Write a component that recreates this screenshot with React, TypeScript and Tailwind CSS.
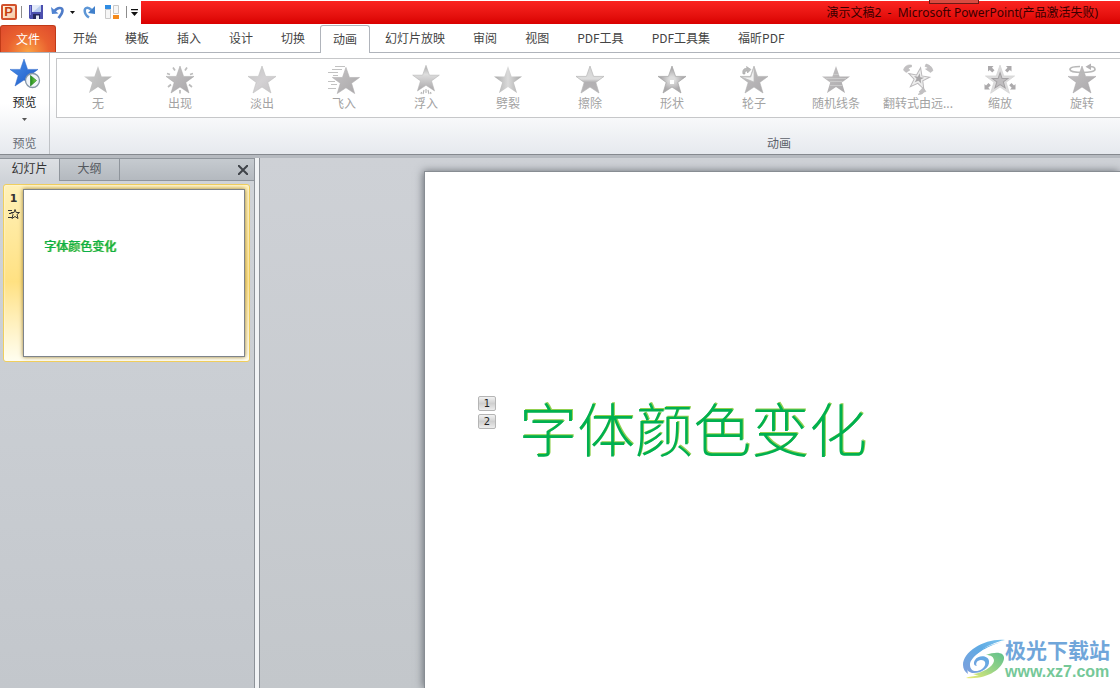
import type { ReactNode } from 'react';

const STAR = '18,4 21.6,14.4 32,14.4 23.8,20.4 27,31 18,25 9,31 12.2,20.4 4,14.4 14.4,14.4';

const ribbonTabs = ['开始', '模板', '插入', '设计', '切换', '动画', '幻灯片放映', '审阅', '视图', 'PDF工具', 'PDF工具集', '福昕PDF'];

type Effect = { id: string; label: string };

const effects: Effect[] = [
  { id: 'none', label: '无' },
  { id: 'appear', label: '出现' },
  { id: 'fade', label: '淡出' },
  { id: 'fly', label: '飞入' },
  { id: 'float', label: '浮入' },
  { id: 'split', label: '劈裂' },
  { id: 'wipe', label: '擦除' },
  { id: 'shape', label: '形状' },
  { id: 'wheel', label: '轮子' },
  { id: 'bars', label: '随机线条' },
  { id: 'turn', label: '翻转式由远...' },
  { id: 'zoom', label: '缩放' },
  { id: 'swivel', label: '旋转' },
];

function Gradients() {
  return (
    <svg className="absolute size-0" aria-hidden="true">
      <defs>
        <linearGradient id="g-none" x1="0" x2="1" y1="0" y2="0.6">
          <stop offset="0" stopColor="#cfcfcf" />
          <stop offset="1" stopColor="#b5b5b5" />
        </linearGradient>
        <linearGradient id="g-solid" x1="0" x2="1" y1="0" y2="1">
          <stop offset="0" stopColor="#c6c4c5" />
          <stop offset="1" stopColor="#a9a7a9" />
        </linearGradient>
        <linearGradient id="g-fade" x1="0" x2="1" y1="0" y2="1">
          <stop offset="0" stopColor="#c2c2c2" />
          <stop offset="0.5" stopColor="#d4d2d4" />
          <stop offset="1" stopColor="#c4c2c4" />
        </linearGradient>
        <linearGradient id="g-down" x1="0" x2="0" y1="0" y2="1">
          <stop offset="0.1" stopColor="#b8b8b8" />
          <stop offset="0.35" stopColor="#dedede" />
          <stop offset="1" stopColor="#a8a6a8" />
        </linearGradient>
        <linearGradient id="g-wipe" x1="0" x2="0" y1="0" y2="1">
          <stop offset="0" stopColor="#d2d2d2" />
          <stop offset="0.48" stopColor="#dddddd" />
          <stop offset="0.6" stopColor="#b2b0b2" />
          <stop offset="1" stopColor="#b6b4b6" />
        </linearGradient>
        <linearGradient id="g-split">
          <stop offset="0" stopColor="#a9a9a9" />
          <stop offset="0.5" stopColor="#dadada" />
          <stop offset="1" stopColor="#a6a6a6" />
        </linearGradient>
        <radialGradient id="g-shape">
          <stop offset="0.2" stopColor="#dddddd" />
          <stop offset="0.8" stopColor="#acaaac" />
        </radialGradient>
        <linearGradient id="g-blue" x1="0" x2="1" y1="0" y2="1">
          <stop offset="0" stopColor="#4b93ec" />
          <stop offset="1" stopColor="#1c56c4" />
        </linearGradient>
        <linearGradient id="g-play">
          <stop offset="0" stopColor="#1e8a1c" />
          <stop offset="1" stopColor="#7cd24c" />
        </linearGradient>
        <linearGradient id="g-sky" x1="0" x2="1" y1="1" y2="0">
          <stop offset="0" stopColor="#7d9fdc" />
          <stop offset="0.6" stopColor="#5fabe4" />
          <stop offset="1" stopColor="#7cc4ee" />
        </linearGradient>
        <linearGradient id="g-leaf" x1="1" x2="0" y1="0" y2="1">
          <stop offset="0" stopColor="#5fc08c" />
          <stop offset="0.5" stopColor="#9ad486" />
          <stop offset="1" stopColor="#eeec74" />
        </linearGradient>
      </defs>
    </svg>
  );
}

const effectArt: Record<string, ReactNode> = {
  none: <polygon points={STAR} fill="url(#g-none)" />,
  appear: (
    <>
      <polygon points={STAR} fill="url(#g-solid)" stroke="#a6a6a6" strokeWidth="0.5" />
      <path d="M11 5.500l2 3M25 5.500l-2 3M5 11.500l3 1M31 11.500l-3 1M6 25l3-2.500M30 25l-3-2.500M18 28v3.500" stroke="#bcbcbc" strokeWidth="1.700" />
    </>
  ),
  fade: <polygon points={STAR} fill="url(#g-fade)" stroke="#c0c0c0" strokeWidth="0.6" />,
  fly: (
    <>
      <polygon points={STAR} fill="url(#g-solid)" stroke="#b0aeb0" strokeWidth="0.6" transform="translate(2.5 1.5) scale(0.97)" />
      <path d="M9 4.500h10M6 7.500h10M2 10.500h10M7 13.500h5M2 19.500h7M5 22.500h6M2 26.500h8" stroke="#c2c2c2" strokeWidth="1.100" />
    </>
  ),
  float: (
    <>
      <polygon points={STAR} fill="url(#g-down)" stroke="#b4b4b4" strokeWidth="0.6" transform="translate(0.9 -0.5) scale(0.95)" />
      <path d="M18 27v4M16 28l-1 4M20 28l1 4M13.500 30l-.5 2M22.500 30l.5 2" stroke="#b4b4b4" strokeWidth="1.100" />
    </>
  ),
  split: <polygon points={STAR} fill="url(#g-split)" />,
  wipe: <polygon points={STAR} fill="url(#g-wipe)" stroke="#b6b6b6" strokeWidth="0.7" />,
  shape: (
    <>
      <polygon points={STAR} fill="url(#g-shape)" stroke="#a4a4a4" strokeWidth="0.7" />
      <rect x="16" y="18" width="4" height="4" fill="#ffffff" />
    </>
  ),
  wheel: (
    <>
      <polygon points={STAR} fill="url(#g-solid)" stroke="#b0b0b0" strokeWidth="0.6" />
      <path d="M18 5v15L5 15h9.700z" fill="#f3f3f3" stroke="#bdbdbd" strokeWidth="0.800" />
      <path d="M7 12c-1-4 1-6 4-5.500l-.5-2 4.500 3-3.500 3.500v-2c-2 0-3 1-2.500 3z" fill="#b9b9b9" stroke="#a6a6a6" strokeWidth="0.600" />
    </>
  ),
  bars: (
    <>
      <polygon points={STAR} fill="url(#g-solid)" />
      <path d="M15 12.500h6M8 16.500h20M11.500 19.500h13M11.500 23.500h13" stroke="#cdcdcd" strokeWidth="0.900" />
    </>
  ),
  turn: (
    <>
      <g transform="translate(5 2.500) rotate(10 14 14) scale(0.760)">
        <polygon points={STAR} fill="#ededed" stroke="#bab8ba" strokeWidth="1.300" />
        <polygon points={STAR} fill="#a9a7a9" transform="translate(9.500 9.500) scale(0.480)" />
      </g>
      <path d="M3.500 8c1-4 4-5.500 8-5v2c-2 0-3 1-3 2l1.500 1-4 2.500zM33 8.500c-1-4-4-6-7-6.500l-1 2.500c2 0 2.500 1 2.500 2l-2 .5 5 3.500zM19 30l4-4.500 3 4-2 .5c-1 2-3 2.500-6 2.500 1-1 2-1.500 2-2.500z" fill="#c2c0c2" stroke="#b4b4b4" strokeWidth="0.500" />
    </>
  ),
  zoom: (
    <>
      <polygon points={STAR} fill="#dcdbdc" stroke="#d6d6d6" strokeWidth="0.800" transform="translate(-0.700 -1) scale(1.040)" />
      <polygon points={STAR} fill="#bfbdbf" stroke="#a3a1a3" strokeWidth="1.800" transform="translate(8 8.500) scale(0.560)" />
      <path d="M6 4h5.500L10 5.700l2.500 2.500-2.300 2.300-2.500-2.500L6 9.500zM29.500 4H24l1.500 1.700L23 8.200l2.300 2.300 2.500-2.500 1.700 1.500zM2.500 27.500V22L4 23.500 6.500 21l2.300 2.300-2.500 2.500L8 27.500zM33.500 27.500V22L32 23.500 29.500 21l-2.300 2.300 2.500 2.500-1.700 1.700z" fill="#acaaac" />
    </>
  ),
  swivel: (
    <>
      <polygon points={STAR} fill="url(#g-solid)" stroke="#a7a5a7" strokeWidth="0.500" />
      <path d="M16 4.500C10 4.500 6 5.500 6 7.500c0 4 25 4 25 0 0-2-2-3-5-3" fill="none" stroke="#b8b8b8" strokeWidth="1.700" />
      <path d="M27 1.500v6.500L21.500 4.800z" fill="#b4b2b4" />
    </>
  ),
};

function EffectButton({ effect }: { effect: Effect }) {
  return (
    <button disabled className="flex w-[82px] shrink-0 flex-col items-center pt-[3px] text-xs leading-[14px] text-[#a3a3a3]">
      <svg width="36" height="34" viewBox="0 0 36 34" fill="none" aria-hidden="true">
        {effectArt[effect.id]}
      </svg>
      {effect.label}
    </button>
  );
}

function QuickAccess() {
  return (
    <div className="flex h-6 w-[141px] shrink-0 items-center bg-white">
      <button className="ml-px flex size-4 items-center justify-center rounded-[2px] border-2 border-[#d2512c] bg-gradient-to-br from-[#fff3e6] to-[#f6c9a2] pr-px font-['Liberation_Sans',sans-serif] text-[13px] font-bold leading-3 text-[#c4400f]">
        P
      </button>
      <span className="ml-1 h-3 w-px bg-[#8c8c8c]" />
      <button aria-label="保存" className="ml-[7px]">
        <svg width="14" height="14" viewBox="0 0 14 14">
          <path d="M0 0h14v14H1l-1-1z" fill="#4b4fae" />
          <path d="M3 0h9v7H3z" fill="#e4ebf8" />
          <path d="M4 7l8-7v7z" fill="#b9cdee" />
          <path d="M4 9h7v5H4z" fill="#25285c" />
          <path d="M7 10.500h3V14H7z" fill="#e3e6f2" />
          <path d="M1 1h1v9H1z" fill="#888ce0" />
        </svg>
      </button>
      <button aria-label="撤消" className="ml-2">
        <svg width="14" height="15" viewBox="0 0 14 15">
          <path d="M3.500 6c3-4 8-4 8-.5 0 3-2 5-4 7.500" fill="none" stroke="#4f7cc8" strokeWidth="2.600" />
          <path d="M0 2l1 7 6.500-.5z" fill="#4f83d2" />
        </svg>
      </button>
      <svg className="ml-[5px]" width="5" height="3" viewBox="0 0 5 3" aria-hidden="true">
        <path d="M0 0h5L2.500 3z" fill="#111" />
      </svg>
      <button aria-label="恢复" className="ml-2">
        <svg width="12" height="15" viewBox="0 0 12 15">
          <path d="M8.500 5C5 1.500 1.500 2.500 1.700 6c.1 3 2 5 4.300 6.500" fill="none" stroke="#5d96d6" strokeWidth="2.500" />
          <path d="M12 1v8L5 8z" fill="#4080cb" />
        </svg>
      </button>
      <button aria-label="版式" className="ml-[10px]">
        <svg width="14" height="14" viewBox="0 0 14 14">
          <path d="M.5 4.500h5v9h-5zM8.500.5h5v8h-5z" fill="#f6f6f6" stroke="#c9c9c9" />
          <path d="M0 0h6v4H0z" fill="#2f8ce2" />
          <path d="M8 10h6v4H8z" fill="#f48a1c" />
        </svg>
      </button>
      <span className="ml-[7px] h-3 w-px bg-[#8c8c8c]" />
      <button aria-label="自定义快速访问工具栏" className="ml-1">
        <svg width="7" height="7" viewBox="0 0 7 7">
          <path d="M0 0h7v1.300H0zM0 3h7L3.500 7z" fill="#111" />
        </svg>
      </button>
    </div>
  );
}

function TitleBar() {
  return (
    <header className="flex h-[25px] items-start bg-white">
      <QuickAccess />
      <div className="relative mt-px flex h-[23px] min-w-0 flex-1 items-center justify-end bg-gradient-to-b from-[#fb2420] to-[#d90000] pr-[22px]">
        <span className="absolute -top-px right-[141px] h-1 w-[50px] border border-t-0 border-[#6b1a16] bg-[#d94c42]" />
        <h1 className="whitespace-pre font-['Noto_Sans','Noto_Sans_CJK_SC',sans-serif] text-xs text-[#3a0000]">
          {'演示文稿2  -  Microsoft PowerPoint(产品激活失败)'}
        </h1>
      </div>
    </header>
  );
}

function RibbonTabs() {
  return (
    <nav className="flex h-7 border-b border-[#b0b4bb] bg-white text-xs leading-6 text-[#444]">
      <button className="mr-[3px] h-[27px] w-14 shrink-0 rounded-t-[3px] border border-b-0 border-[#c03a17] bg-[radial-gradient(ellipse_at_bottom,#fba244_0%,#e9602f_55%,#de4a2d_100%)] text-white">
        文件
      </button>
      {ribbonTabs.map((tab) =>
        tab === '动画' ? (
          <button key={tab} aria-current="page" className="mx-px h-7 shrink-0 rounded-t-[3px] border border-b-0 border-[#b0b4bb] bg-white px-3 pb-px">
            {tab}
          </button>
        ) : (
          <button key={tab} className="h-[26px] shrink-0 px-[14px]">
            {tab}
          </button>
        ),
      )}
    </nav>
  );
}

function Ribbon() {
  return (
    <section className="flex h-[102px] overflow-hidden border-b border-[#85898f] bg-gradient-to-b from-white from-50% to-[#e6e9ee]">
      <div className="flex w-[50px] shrink-0 flex-col items-center border-r border-[#bfc2c6]">
        <button className="flex flex-col items-center pt-[3px] text-xs leading-[14px] text-[#222]">
          <svg width="32" height="34" viewBox="0 0 32 34" aria-hidden="true">
            <polygon points={STAR} fill="url(#g-blue)" stroke="#2c66c8" strokeWidth="0.500" transform="translate(-3 -1)" />
            <circle cx="23.500" cy="24.500" r="7" fill="#f1f5f8" stroke="#8495a8" strokeWidth="1.300" />
            <path d="M21.500 19.500l6 5-6 5.500z" fill="url(#g-play)" stroke="#177a17" strokeWidth="0.600" />
          </svg>
          <span className="pt-[5px]">预览</span>
          <svg className="mt-[9px]" width="5" height="3" viewBox="0 0 5 3" aria-hidden="true">
            <path d="M0 0h5L2.500 3z" fill="#555" />
          </svg>
        </button>
        <span className="mt-auto pb-[4px] text-xs leading-[14px] text-[#686d75]">预览</span>
      </div>
      <div className="flex w-[1452px] shrink-0 flex-col pl-[6px] pt-[5px]">
        <div className="flex h-[60px] border border-[#c6c7c9] bg-white">
          {effects.map((e) => (
            <EffectButton key={e.id} effect={e} />
          ))}
        </div>
        <span className="mt-auto pb-[4px] text-center text-xs leading-[14px] text-[#5c6169]">动画</span>
      </div>
    </section>
  );
}

function SlidePanel() {
  return (
    <aside className="flex w-[255px] shrink-0 flex-col border-r border-[#8d9298] bg-gradient-to-b from-[#d0d4d9] to-[#c3c7cc]">
      <div className="flex h-[23px] border-y border-[#8f959c] bg-gradient-to-b from-[#c6cbd0] to-[#b4b9bf] text-xs leading-[18px] text-[#54585e]">
        <button className="-mb-px w-[59px] bg-gradient-to-b from-[#dde0e4] to-[#cfd3d8] pb-1 text-[#333]">幻灯片</button>
        <button className="w-[61px] border-x border-[#8f959c] pb-[3px]">大纲</button>
        <button aria-label="关闭" className="ml-auto mr-[6px]">
          <svg width="10" height="10" viewBox="0 0 10 10">
            <path d="M0 0l10 10M10 0L0 10" stroke="#3f4349" strokeWidth="2" />
          </svg>
        </button>
      </div>
      <div className="ml-[3px] mr-1 mt-[3px] flex rounded-[3px] border border-[#f0cf5e] bg-gradient-to-b from-[#fff1b8] via-[#ffe182] via-55% to-[#fffef0] pb-1 pr-1 pt-1 shadow-[inset_0_0_2px_#fff]">
        <div className="flex w-[19px] shrink-0 flex-col items-center pt-1 font-['DejaVu_Sans','Noto_Sans_CJK_SC',sans-serif] text-[11px] font-bold leading-3 text-[#333]">
          1
          <svg className="mt-1" width="12" height="10" viewBox="0 0 12 10" fill="none" stroke="#333" strokeWidth="1" aria-hidden="true">
            <path d="M0 1.500h4M1 4.500h2M0 8.500h4M7 .5l1.200 3H11.500L9 5.500l1 4-3-2-3 2 1-4-2-2h3z" />
          </svg>
        </div>
        <div className="h-[168px] flex-1 border border-[#7e848b] bg-white pl-5 pt-[48px] font-['Noto_Sans_CJK_SC',sans-serif] text-xs font-medium leading-4 text-[#0bb04b] shadow-[0_0_4px_#957b35] [text-shadow:1px_0_0_#8ed04a]">
          字体颜色变化
        </div>
      </div>
    </aside>
  );
}

function OrderTag({ n }: { n: number }) {
  return (
    <span className="flex h-[15px] w-[18px] items-center justify-center rounded-[2px] border border-[#b5b5b5] bg-gradient-to-b from-[#f2f2f2] via-[#cfcfcf] to-[#ededed] font-['DejaVu_Sans',sans-serif] text-[10px] leading-3 text-[#222]">
      {n}
    </span>
  );
}

function Watermark() {
  return (
    <div className="absolute bottom-[7px] right-[10px] flex items-center font-['Liberation_Sans','Noto_Sans_CJK_SC',sans-serif] font-bold">
      <svg width="43" height="42" viewBox="0 0 43 42" aria-hidden="true">
        <path d="M43 1C24-1 1 12 1 26c0 4 2 7 5 9-2-8 2-15 10-21C24 7 33 3 43 1z" fill="url(#g-sky)" />
        <path d="M40 3C25 7 8 17 8 26c0 6 6 8 12 4 5-4 4-9-1-9-4 0-6 4-4 6-3 0-4-3-2-6 3-5 13-5 14 1 1 7-9 13-17 12C0 31 5 21 14 14 22 8 31 5 40 3z" fill="url(#g-sky)" />
        <path d="M24 16c10-4 19-3 18 4-2 10-17 21-38 19 3-2 8-1 13-3-2 0-4 0-6-1 9-1 20-7 21-13 0-4-3-6-8-6z" fill="url(#g-leaf)" />
      </svg>
      <div className="flex flex-col">
        <span className="text-[21px] leading-6 text-[#70a6da]">极光下载站</span>
        <a href="#" className="text-[16px] leading-[18px] text-[#75c898]">www.xz7.com</a>
      </div>
    </div>
  );
}

export default function App() {
  return (
    <div className="relative flex h-screen flex-col overflow-hidden bg-[#c7cbd0] font-['Noto_Sans_CJK_SC',sans-serif]">
      <Gradients />
      <TitleBar />
      <RibbonTabs />
      <Ribbon />
      <main className="flex min-h-0 flex-1 border-t-[3px] border-[#b6bac0]">
        <SlidePanel />
        <div className="w-[5px] shrink-0 border-r border-[#8d9298] bg-[#f1f3f5]" />
        <div className="flex min-w-0 flex-1 overflow-hidden bg-gradient-to-b from-[#ced1d6] to-[#c3c7cb] pl-[164px] pt-[13px]">
          <section className="flex min-w-0 flex-1 items-start border-l border-t border-[#888d93] bg-white pl-[53px] pt-[224px] shadow-[-1px_0_8px_#6b7077]">
            <div className="flex flex-col gap-[3px]">
              <OrderTag n={1} />
              <OrderTag n={2} />
            </div>
            <h2 className="ml-[23px] whitespace-nowrap text-[58px] font-light leading-[62px] text-[#00b050] [text-shadow:1px_-1px_0_#92d050]">
              字体颜色变化
            </h2>
          </section>
        </div>
      </main>
      <Watermark />
    </div>
  );
}
